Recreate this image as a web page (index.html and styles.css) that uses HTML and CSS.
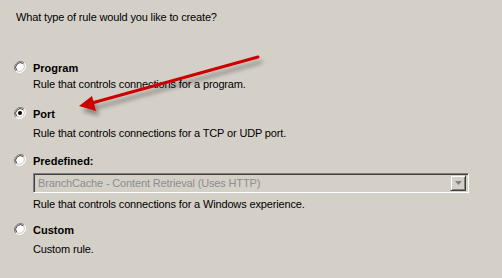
FILE: index.html
```html
<!DOCTYPE html>
<html>
<head>
<meta charset="utf-8">
<link rel="stylesheet" href="styles.css">
</head>
<body>
<div class="page">
  <p class="question">What type of rule would you like to create?</p>
  <div class="options">
    <div class="option opt-program">
      <span class="radio"><svg width="12" height="12" viewBox="0 0 12 12"><path d="M10.2 1.8A6 6 0 0 0 1.8 10.2" fill="none" stroke="#808080" stroke-width="1"/><path d="M1.8 10.2A6 6 0 0 0 10.2 1.8" fill="none" stroke="#ffffff" stroke-width="1"/><circle cx="6" cy="6" r="4.6" fill="#fff"/><path d="M9.3 2.7A4.7 4.7 0 0 0 2.7 9.3" fill="none" stroke="#404040" stroke-width="1"/><path d="M2.7 9.3A4.7 4.7 0 0 0 9.3 2.7" fill="none" stroke="#d4d0c8" stroke-width="1"/></svg></span>
      <div class="body">
        <div class="label">Program</div>
        <div class="desc">Rule that controls connections for a program.</div>
      </div>
    </div>
    <div class="option opt-port">
      <span class="radio"><svg width="12" height="12" viewBox="0 0 12 12"><path d="M10.2 1.8A6 6 0 0 0 1.8 10.2" fill="none" stroke="#808080" stroke-width="1"/><path d="M1.8 10.2A6 6 0 0 0 10.2 1.8" fill="none" stroke="#ffffff" stroke-width="1"/><circle cx="6" cy="6" r="4.6" fill="#fff"/><path d="M9.3 2.7A4.7 4.7 0 0 0 2.7 9.3" fill="none" stroke="#404040" stroke-width="1"/><path d="M2.7 9.3A4.7 4.7 0 0 0 9.3 2.7" fill="none" stroke="#d4d0c8" stroke-width="1"/><circle cx="6" cy="6" r="2" fill="#000"/></svg></span>
      <div class="body">
        <div class="label">Port</div>
        <div class="desc">Rule that controls connections for a TCP or UDP port.</div>
      </div>
    </div>
    <div class="option opt-predefined">
      <span class="radio"><svg width="12" height="12" viewBox="0 0 12 12"><path d="M10.2 1.8A6 6 0 0 0 1.8 10.2" fill="none" stroke="#808080" stroke-width="1"/><path d="M1.8 10.2A6 6 0 0 0 10.2 1.8" fill="none" stroke="#ffffff" stroke-width="1"/><circle cx="6" cy="6" r="4.6" fill="#fff"/><path d="M9.3 2.7A4.7 4.7 0 0 0 2.7 9.3" fill="none" stroke="#404040" stroke-width="1"/><path d="M2.7 9.3A4.7 4.7 0 0 0 9.3 2.7" fill="none" stroke="#d4d0c8" stroke-width="1"/></svg></span>
      <div class="body">
        <div class="label">Predefined:</div>
        <div class="combo">
          <span class="combo-text">BranchCache - Content Retrieval (Uses HTTP)</span>
          <span class="combo-btn"><svg width="7" height="4" viewBox="0 0 7 4"><path d="M0 0H7L3.5 4Z" fill="#808080"/></svg></span>
        </div>
        <div class="desc">Rule that controls connections for a Windows experience.</div>
      </div>
    </div>
    <div class="option opt-custom">
      <span class="radio"><svg width="12" height="12" viewBox="0 0 12 12"><path d="M10.2 1.8A6 6 0 0 0 1.8 10.2" fill="none" stroke="#808080" stroke-width="1"/><path d="M1.8 10.2A6 6 0 0 0 10.2 1.8" fill="none" stroke="#ffffff" stroke-width="1"/><circle cx="6" cy="6" r="4.6" fill="#fff"/><path d="M9.3 2.7A4.7 4.7 0 0 0 2.7 9.3" fill="none" stroke="#404040" stroke-width="1"/><path d="M2.7 9.3A4.7 4.7 0 0 0 9.3 2.7" fill="none" stroke="#d4d0c8" stroke-width="1"/></svg></span>
      <div class="body">
        <div class="label">Custom</div>
        <div class="desc">Custom rule.</div>
      </div>
    </div>
  </div>
  <svg class="annotation" width="502" height="278" viewBox="0 0 502 278">
    <defs>
      <filter id="shadow" x="-20%" y="-50%" width="140%" height="200%">
        <feDropShadow dx="3" dy="5" stdDeviation="2" flood-color="#000" flood-opacity="0.35"/>
      </filter>
    </defs>
    <g filter="url(#shadow)">
      <line x1="258" y1="57" x2="92" y2="103" stroke="#cc0000" stroke-width="3" stroke-linecap="round"/>
      <path d="M79 106L92 96L96 111Z" fill="#cc0000"/>
    </g>
  </svg>
</div>
</body>
</html>
```
FILE: styles.css
```css
html, body {
  margin: 0;
  padding: 0;
  background: #d4d0c8;
}
.page {
  position: relative;
  width: 502px;
  height: 278px;
  overflow: hidden;
  font-family: "Liberation Sans", Arial, sans-serif;
  font-size: 11px;
  line-height: 13px;
  letter-spacing: -0.15px;
  color: #000;
}
.question {
  margin: 0;
  padding: 11px 0 0 16px;
}
.options {
  display: flex;
  flex-direction: column;
  padding-left: 14px;
  margin-top: 38px;
}
.option {
  display: flex;
  align-items: flex-start;
  gap: 7px;
}
.radio {
  display: block;
  width: 12px;
  height: 12px;
  margin-top: -1px;
}
.radio svg {
  display: block;
}
.body {
  display: flex;
  flex-direction: column;
}
.label {
  font-weight: bold;
  letter-spacing: 0;
}
.opt-program .desc { margin-top: 3px; }
.opt-port { margin-top: 17px; }
.opt-port .desc { margin-top: 6px; }
.opt-predefined { margin-top: 15px; }
.opt-custom { margin-top: 13px; }
.opt-custom .desc { margin-top: 6px; }
.combo {
  display: flex;
  align-items: center;
  justify-content: space-between;
  box-sizing: border-box;
  width: 436px;
  height: 20px;
  margin-top: 5px;
  margin-bottom: 5px;
  border-top: 1px solid #808080;
  border-left: 1px solid #808080;
  border-right: 1px solid #ffffff;
  border-bottom: 1px solid #ffffff;
  box-shadow: inset 1px 1px 0 #404040, inset -1px -1px 0 #d4d0c8;
  padding: 2px 2px 2px 4px;
}
.combo-text {
  color: #8d8d8d;
}
.combo-btn {
  display: flex;
  align-items: center;
  justify-content: center;
  box-sizing: border-box;
  width: 16px;
  height: 16px;
  background: #d4d0c8;
  border-top: 1px solid #d4d0c8;
  border-left: 1px solid #d4d0c8;
  border-right: 1px solid #404040;
  border-bottom: 1px solid #404040;
  box-shadow: inset 1px 1px 0 #ffffff, inset -1px -1px 0 #808080;
}
.annotation {
  position: absolute;
  left: 0;
  top: 0;
  pointer-events: none;
}
```
